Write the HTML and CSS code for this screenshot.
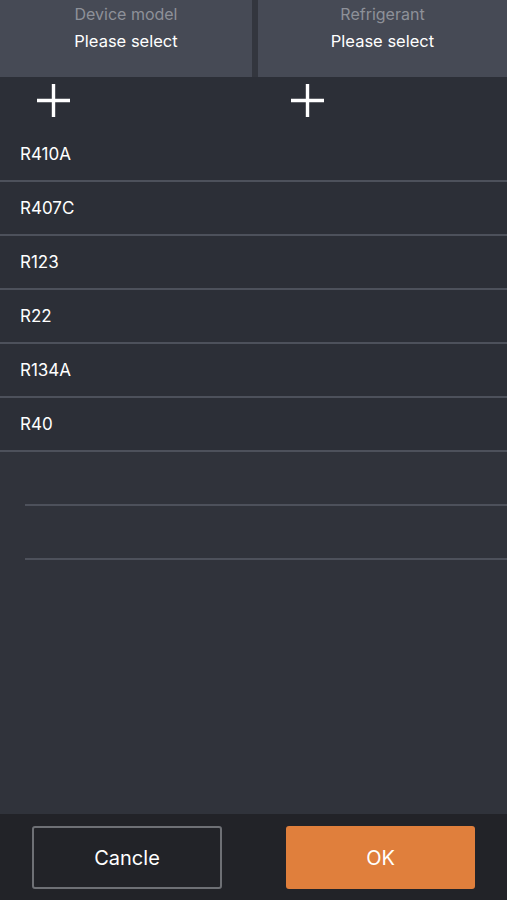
FILE: index.html
```html
<!DOCTYPE html>
<html>
<head>
<meta charset="utf-8">
<link rel="stylesheet" href="styles.css">
</head>
<body>
<div class="app">
  <div class="header">
    <div class="panel left">
      <div class="label">Device model</div>
      <div class="value">Please select</div>
    </div>
    <div class="panel">
      <div class="label">Refrigerant</div>
      <div class="value">Please select</div>
    </div>
  </div>
  <div class="plus-row">
    <div class="plus-cell">
      <svg width="33" height="33" viewBox="0 0 33 33"><path d="M16.5 0V33M0 16.5H33" stroke="#fff" stroke-width="3.4" fill="none"/></svg>
    </div>
    <div class="plus-cell">
      <svg width="33" height="33" viewBox="0 0 33 33"><path d="M16.5 0V33M0 16.5H33" stroke="#fff" stroke-width="3.4" fill="none"/></svg>
    </div>
  </div>
  <div class="list">
    <div class="row">R410A</div>
    <div class="row">R407C</div>
    <div class="row">R123</div>
    <div class="row">R22</div>
    <div class="row">R134A</div>
    <div class="row">R40</div>
    <div class="row empty"></div>
    <div class="row empty"></div>
  </div>
  <div class="footer">
    <button class="btn cancel">Cancle</button>
    <button class="btn ok">OK</button>
  </div>
</div>
</body>
</html>
```
FILE: styles.css
```css
html, body {
  margin: 0;
  padding: 0;
  background: #30333b;
  font-family: "Inter", "Liberation Sans", sans-serif;
}
.app {
  width: 507px;
  height: 900px;
  display: flex;
  flex-direction: column;
  background: #30333b;
}
.header {
  height: 77px;
  display: flex;
  gap: 6px;
  background: #33363e;
}
.panel {
  flex: 1;
  background: #464a55;
  display: flex;
  flex-direction: column;
  align-items: center;
}
.panel.left {
  flex: 0 0 252px;
}
.label {
  color: #8e9199;
  font-size: 16px;
  margin-top: 4px;
  height: 20px;
  line-height: 20px;
}
.value {
  color: #ffffff;
  font-size: 16.5px;
  margin-top: 7px;
  line-height: 20px;
}
.plus-row {
  height: 51px;
  display: flex;
  background: #2c2f37;
}
.plus-cell {
  width: 254px;
  display: flex;
  align-items: flex-start;
  padding-left: 37px;
  padding-top: 7px;
  box-sizing: border-box;
}
.list {
  flex: 1;
  display: flex;
  flex-direction: column;
}
.row {
  height: 52px;
  border-bottom: 2px solid #4d515b;
  background: #2c2f37;
  color: #fff;
  font-size: 17px;
  display: flex;
  align-items: center;
  padding-left: 20px;
}
.row.empty {
  background: transparent;
  margin-left: 25px;
  padding-left: 0;
}
.footer {
  height: 86px;
  background: #222328;
  display: flex;
  justify-content: space-between;
  padding: 12px 32px 11px 32px;
  box-sizing: border-box;
}
.btn {
  width: 190px;
  height: 63px;
  border-radius: 3px;
  font-family: "Inter", "Liberation Sans", sans-serif;
  font-size: 20px;
  color: #fff;
  margin: 0;
}
.cancel {
  background: #222328;
  border: 2px solid #6e7075;
}
.ok {
  background: #e07f3c;
  border: none;
  width: 189px;
}
```
